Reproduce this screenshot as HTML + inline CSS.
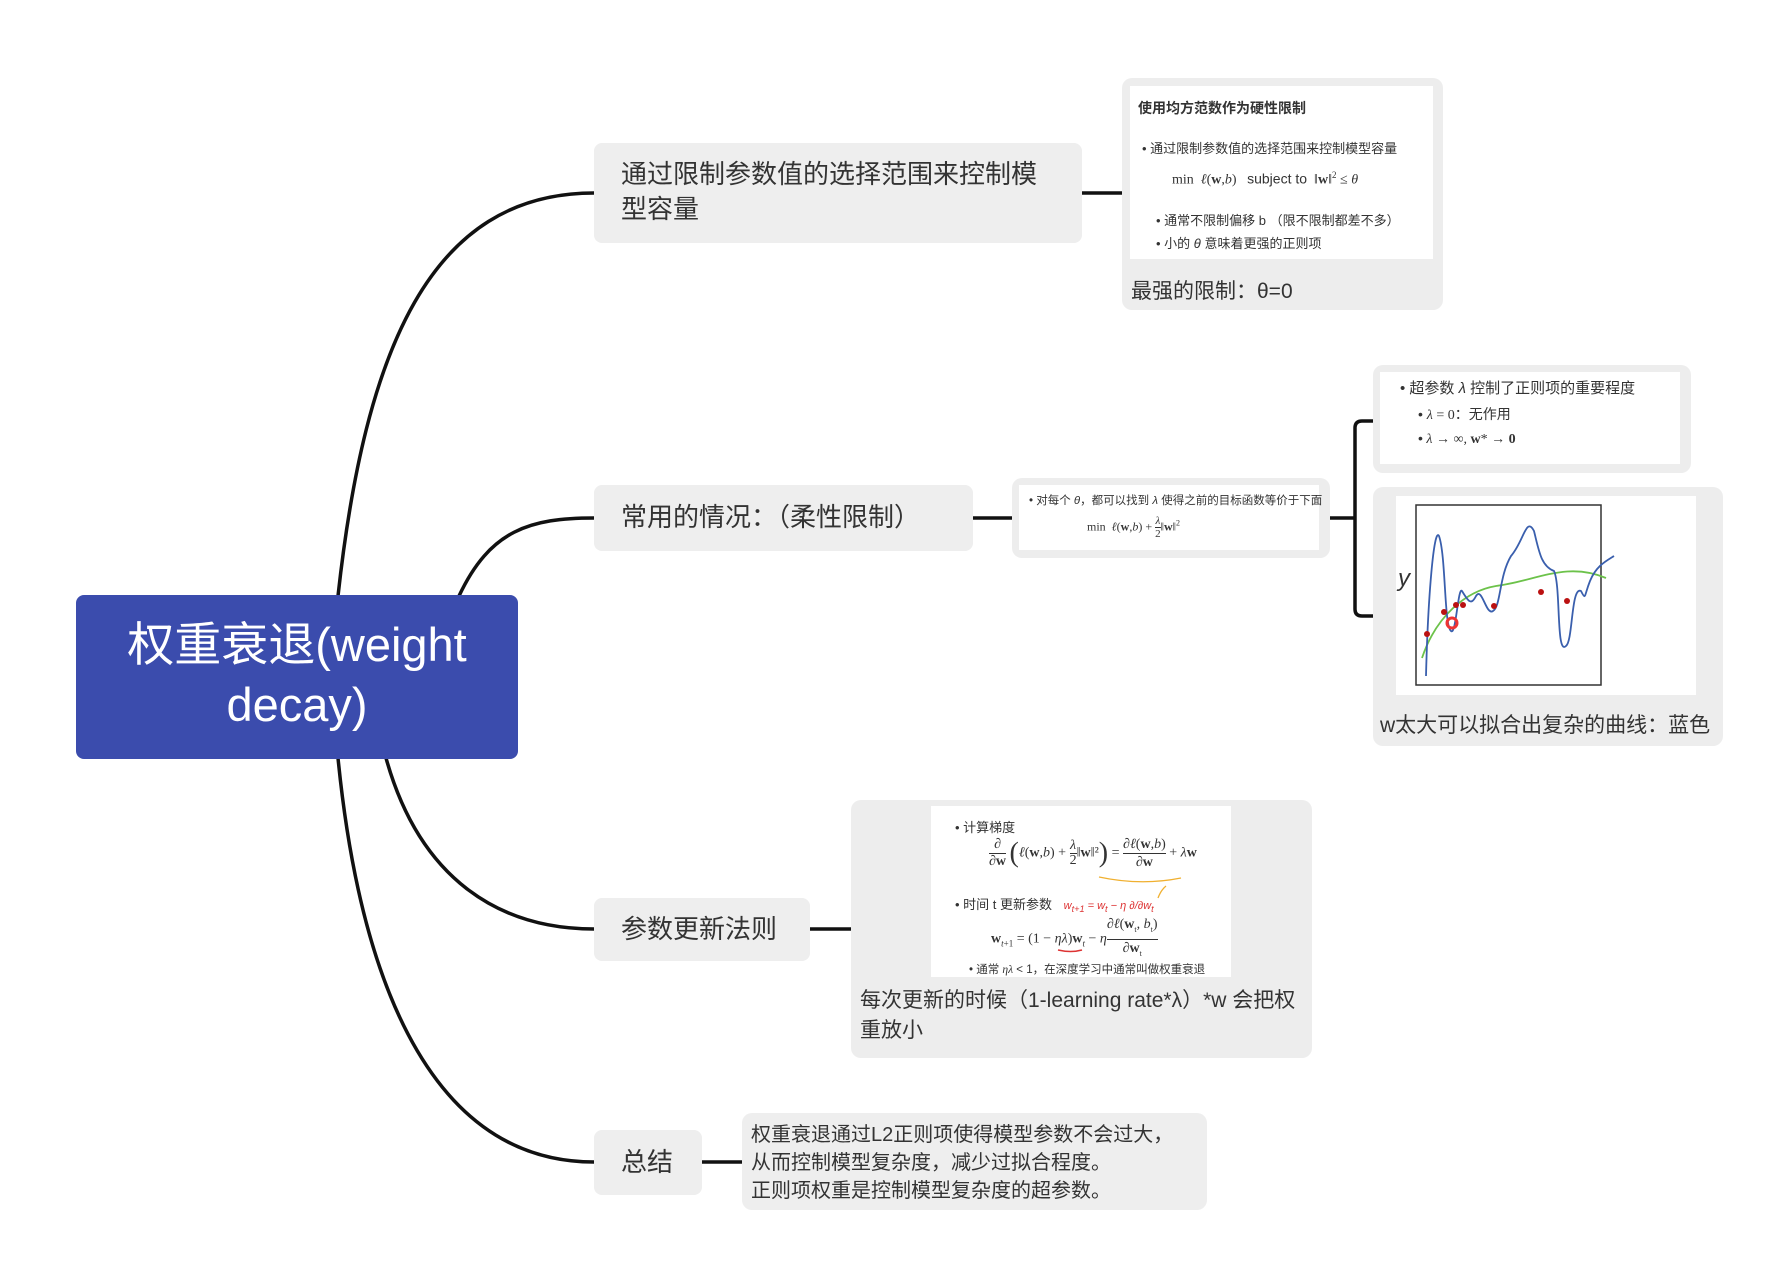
<!DOCTYPE html>
<html><head><meta charset="utf-8"><style>
body{margin:0;width:1789px;height:1281px;background:#fff;position:relative;overflow:hidden;font-family:"Liberation Sans","Noto Sans CJK SC",sans-serif;color:#333}
.a{position:absolute}
.node{position:absolute;background:#eeeeee;border-radius:8px;font-size:26px;color:#333;line-height:35px}
.card{position:absolute;background:#ededed;border-radius:10px}
.img{position:absolute;background:#fff;color:#333}
.s{font-size:13px;position:absolute;white-space:nowrap}
.m{font-family:"Liberation Serif",serif}
</style></head><body>
<svg class="a" style="left:0;top:0" width="1789" height="1281">
<g fill="none" stroke="#111" stroke-width="3.5">
<path d="M338 596 C 365 350, 430 193, 594 193"/>
<path d="M459 596 C 490 530, 530 518, 594 518"/>
<path d="M386 758 C 420 880, 500 929, 594 929"/>
<path d="M338 758 C 362 1000, 440 1162, 594 1162"/>
<path d="M1082 193 H1122"/><path d="M973 518 H1012"/>
<path d="M1324 518 H1355"/><path d="M1373 421 H1362 Q1355 421 1355 428 V609 Q1355 616 1362 616 H1373"/>
<path d="M810 929 H851"/><path d="M702 1162 H742"/>
</g></svg>
<div class="a" style="left:76px;top:595px;width:442px;height:164px;background:#3b4cad;border-radius:8px;color:#fff;font-size:47px;text-align:center;line-height:60px;padding-top:20px;box-sizing:border-box">权重衰退(weight<br>decay)</div>

<div class="node" style="left:594px;top:143px;width:488px;height:100px;padding:14px 0 0 27px;box-sizing:border-box">通过限制参数值的选择范围来控制模<br>型容量</div>
<div class="node" style="left:594px;top:485px;width:379px;height:66px;padding:15px 0 0 27px;box-sizing:border-box">常用的情况：（柔性限制）</div>
<div class="node" style="left:594px;top:898px;width:216px;height:63px;padding:14px 0 0 27px;box-sizing:border-box">参数更新法则</div>
<div class="node" style="left:594px;top:1130px;width:108px;height:65px;padding:15px 0 0 27px;box-sizing:border-box">总结</div>

<div class="card" style="left:1122px;top:78px;width:321px;height:232px">
 <div class="img" style="left:8px;top:8px;width:303px;height:173px">
  <div class="s" style="left:8px;top:12px;font-weight:bold;font-size:14px">使用均方范数作为硬性限制</div>
  <div class="s" style="left:12px;top:52px">• 通过限制参数值的选择范围来控制模型容量</div>
  <div class="s m" style="left:42px;top:84px;font-size:14px">min &nbsp;<i>ℓ</i>(<b>w</b>,<i>b</i>) &nbsp; <span style="font-family:'Liberation Sans'">subject to</span> &nbsp;‖<b>w</b>‖<sup style="font-size:9px">2</sup> ≤ <i>θ</i></div>
  <div class="s" style="left:26px;top:124px">• 通常不限制偏移 b （限不限制都差不多）</div>
  <div class="s" style="left:26px;top:147px">• 小的 <i>θ</i> 意味着更强的正则项</div>
 </div>
 <div class="a" style="left:9px;top:197px;font-size:21px">最强的限制：θ=0</div>
</div>

<div class="card" style="left:1012px;top:478px;width:318px;height:80px">
 <div class="img" style="left:7px;top:7px;width:300px;height:65px">
  <div class="s" style="left:10px;top:7px;font-size:11.5px">• 对每个 <i>θ</i>，都可以找到 <i>λ</i> 使得之前的目标函数等价于下面</div>
  <div class="s m" style="left:68px;top:30px;font-size:12px">min &nbsp;<i>ℓ</i>(<b>w</b>,<i>b</i>) + <span style="display:inline-block;vertical-align:middle;text-align:center;line-height:12px;font-size:11px"><i>λ</i><br><span style="display:block;border-top:1px solid #333">2</span></span>‖<b>w</b>‖<sup style="font-size:8px">2</sup></div>
 </div>
</div>

<div class="card" style="left:1373px;top:365px;width:318px;height:108px">
 <div class="img" style="left:7px;top:7px;width:300px;height:92px">
  <div class="s" style="left:20px;top:5px;font-size:15px">• 超参数 <i>λ</i> 控制了正则项的重要程度</div>
  <div class="s" style="left:38px;top:32px;font-size:14px">• <span class="m"><i>λ</i> = 0</span>：无作用</div>
  <div class="s m" style="left:38px;top:58px;font-size:14px"><span style="font-family:'Liberation Sans'">•</span> <i>λ</i> → ∞, <b>w</b>* → <b>0</b></div>
 </div>
</div>

<div class="card" style="left:1373px;top:487px;width:350px;height:259px">
 <div class="img" style="left:23px;top:9px;width:300px;height:199px">
  <svg width="300" height="199">
   <rect x="20" y="9" width="185" height="180" fill="none" stroke="#333" stroke-width="1.5"/>
   <text x="2" y="90" font-size="24" font-style="italic" fill="#333" font-family="Liberation Sans">y</text>
   <path d="M26 162 C 40 120, 70 95, 100 90 C 140 85, 170 65, 210 82" fill="none" stroke="#6cc24a" stroke-width="1.8"/>
   <path d="M30 180 C 32 100, 38 30, 43 40 C 50 60, 48 130, 55 135 C 60 140, 62 90, 66 95 C 72 105, 75 110, 80 100 C 86 90, 90 120, 97 115 C 105 110, 103 80, 115 60 C 128 45, 130 20, 138 35 C 143 55, 145 70, 158 75 C 165 90, 160 160, 170 150 C 177 145, 175 90, 185 95 C 190 105, 188 100, 194 85 C 200 70, 210 65, 218 60" fill="none" stroke="#3a5fad" stroke-width="1.8"/>
   <g fill="#b11"><circle cx="31" cy="138" r="3"/><circle cx="48" cy="116" r="3"/><circle cx="60" cy="109" r="3"/><circle cx="67" cy="109" r="3"/><circle cx="98" cy="110" r="3"/><circle cx="145" cy="96" r="3"/><circle cx="171" cy="105" r="3"/></g>
   <circle cx="56" cy="127" r="5" fill="none" stroke="#e33" stroke-width="3"/>
  </svg>
 </div>
 <div class="a" style="left:7px;top:222px;font-size:21px;white-space:nowrap">w太大可以拟合出复杂的曲线：蓝色</div>
</div>

<div class="card" style="left:851px;top:800px;width:461px;height:258px">
 <div class="img" style="left:80px;top:6px;width:300px;height:171px">
  <div class="s" style="left:24px;top:11px;font-size:13px">• 计算梯度</div>
  <div class="s m" style="left:58px;top:30px;font-size:14px"><span style="display:inline-block;vertical-align:middle;text-align:center;line-height:16px">∂<br><span style="display:block;border-top:1px solid #333">∂<b>w</b></span></span> <span style="font-size:28px;vertical-align:middle">(</span><i>ℓ</i>(<b>w</b>,<i>b</i>) + <span style="display:inline-block;vertical-align:middle;text-align:center;line-height:14px"><i>λ</i><br><span style="display:block;border-top:1px solid #333">2</span></span>‖<b>w</b>‖²<span style="font-size:28px;vertical-align:middle">)</span> = <span style="display:inline-block;vertical-align:middle;text-align:center;line-height:17px">∂<i>ℓ</i>(<b>w</b>,<i>b</i>)<br><span style="display:block;border-top:1px solid #333">∂<b>w</b></span></span> + <i>λ</i><b>w</b></div>
  <svg class="a" style="left:165px;top:68px" width="110" height="30"><path d="M3 3 Q45 12 85 4 M70 12 Q65 16 62 24" fill="none" stroke="#f0b030" stroke-width="1.3"/></svg>
  <div class="s" style="left:24px;top:88px;font-size:13px">• 时间 t 更新参数 <span style="color:#d33;font-size:11px;margin-left:8px;font-style:italic">w<sub>t+1</sub> = w<sub>t</sub> − η ∂/∂w<sub>t</sub></span></div>
  <div class="s m" style="left:60px;top:110px;font-size:14px"><b>w</b><sub style="font-size:9px"><i>t</i>+1</sub> = (1 − <i>ηλ</i>)<b>w</b><sub style="font-size:9px"><i>t</i></sub> − <i>η</i><span style="display:inline-block;vertical-align:middle;text-align:center;line-height:18px">∂<i>ℓ</i>(<b>w</b><sub style="font-size:8px">t</sub>, <i>b</i><sub style="font-size:8px">t</sub>)<br><span style="display:block;border-top:1px solid #333">∂<b>w</b><sub style="font-size:8px">t</sub></span></span></div>
  <svg class="a" style="left:125px;top:140px" width="30" height="8"><path d="M2 4 Q15 7 26 4" fill="none" stroke="#d33" stroke-width="1.5"/></svg>
  <div class="s" style="left:38px;top:155px;font-size:11.5px">• 通常 <i class="m">ηλ</i> &lt; 1，在深度学习中通常叫做权重衰退</div>
 </div>
 <div class="a" style="left:9px;top:186px;font-size:21px;line-height:30px;width:450px">每次更新的时候（1-learning rate*λ）*w 会把权<br>重放小</div>
</div>

<div class="card" style="left:742px;top:1113px;width:465px;height:97px;background:#eeeeee">
 <div class="a" style="left:9px;top:8px;font-size:20px;line-height:28px;white-space:nowrap">权重衰退通过L2正则项使得模型参数不会过大，<br>从而控制模型复杂度，减少过拟合程度。<br>正则项权重是控制模型复杂度的超参数。</div>
</div>
</body></html>
